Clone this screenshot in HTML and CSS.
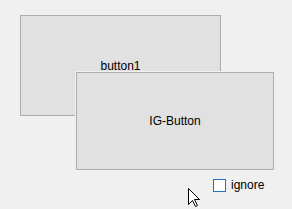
FILE: index.html
```html
<!DOCTYPE html>
<html lang="en">
<head>
    <meta charset="UTF-8">
    <meta name="viewport" content="width=device-width, initial-scale=1.0">
    <title>Form1</title>
    <link rel="stylesheet" href="styles.css">
</head>
<body>
    <div class="form-canvas">
        <button class="win-button button1" type="button">button1</button>
        <button class="win-button ig-button" type="button">IG-Button</button>

        <label class="win-check">
            <span class="check-box"></span>
            <span class="check-label">ignore</span>
        </label>

        <!-- mouse pointer -->
        <svg class="cursor" width="13" height="20" viewBox="0 0 13 20">
            <path d="M0.5 0.5 L0.5 16.5 L4.5 12.5 L7.5 18.5 L9.5 17.5 L6.5 11.5 L11.5 11.5 Z"
                  fill="#ffffff" stroke="#000000" stroke-width="1" stroke-linejoin="miter"/>
        </svg>
    </div>
</body>
</html>
```

FILE: styles.css
```css
html, body {
    margin: 0;
    padding: 0;
}
body {
    background: #f0f0f0;
    font-family: "Liberation Sans", Arial, sans-serif;
    font-size: 12px;
    color: #000;
}
.form-canvas {
    position: relative;
    width: 292px;
    height: 209px;
    overflow: hidden;
}
.win-button {
    position: absolute;
    box-sizing: border-box;
    margin: 0;
    padding: 0;
    background: #e1e1e1;
    border: 1px solid #adadad;
    border-radius: 0;
    font-family: inherit;
    font-size: 12px;
    color: #000;
    display: flex;
    align-items: center;
    justify-content: center;
}
.button1 {
    left: 20px;
    top: 15px;
    width: 201px;
    height: 101px;
}
.ig-button {
    left: 76px;
    top: 72px;
    width: 198px;
    height: 98px;
    box-shadow: 0 0 0 1px #f0f0f0;
}
.win-check {
    position: absolute;
    left: 213px;
    top: 177px;
    display: flex;
    align-items: center;
    gap: 5px;
    height: 16px;
}
.check-box {
    box-sizing: border-box;
    width: 13px;
    height: 13px;
    background: #fff;
    border: 1px solid #1e72c8;
}
.check-label {
    line-height: 16px;
}
.cursor {
    position: absolute;
    left: 188px;
    top: 188px;
}
```
